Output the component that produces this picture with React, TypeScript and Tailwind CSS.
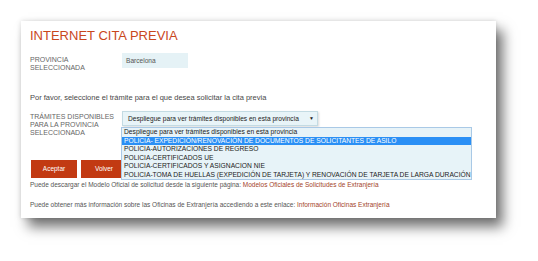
import React from 'react';

const opciones = [
  'Despliegue para ver trámites disponibles en esta provincia',
  'POLICIA- EXPEDICIÓN/RENOVACIÓN DE DOCUMENTOS DE SOLICITANTES DE ASILO',
  'POLICIA-AUTORIZACIONES DE REGRESO',
  'POLICIA-CERTIFICADOS UE',
  'POLICIA-CERTIFICADOS Y ASIGNACION NIE',
  'POLICIA-TOMA DE HUELLAS (EXPEDICIÓN DE TARJETA) Y RENOVACIÓN DE TARJETA DE LARGA DURACIÓN',
];

const App: React.FC = () => {
  return (
    <div className="w-[538px] h-[261px] bg-white pt-[21px] pl-[21px] font-['Liberation_Sans',Arial,sans-serif]">
      <div className="relative w-[475px] h-[197px] bg-white pl-[9px] pt-[7px] shadow-[7px_9px_12px_rgba(0,0,0,0.55),0_0_5px_rgba(0,0,0,0.15)]">
        <h1 className="text-[13px] leading-[15px] text-[#c9471d]">INTERNET CITA PREVIA</h1>

        <div className="flex mt-[10px]">
          <div className="w-[92px] mt-[3px] text-[7px] leading-[8px] text-[#666]">
            PROVINCIA
            <br />
            SELECCIONADA
          </div>
          <div className="w-[66px] h-[15px] bg-[#e5f2f6] pl-[4px] text-[6.6px] leading-[15px] text-[#555]">
            Barcelona
          </div>
        </div>

        <p className="mt-[21px] text-[7.5px] leading-[10px] text-[#484848] whitespace-nowrap">
          Por favor, seleccione el trámite para el que desea solicitar la cita previa
        </p>

        <div className="flex items-start h-[25px] mt-[8px]">
          <div className="w-[92px] mt-[2px] text-[7px] leading-[8px] text-[#666]">
            TRÁMITES DISPONIBLES
            <br />
            PARA LA PROVINCIA
            <br />
            SELECCIONADA
          </div>
          <div className="relative">
            <div className="w-[196px] h-[15px] bg-[#e8f4f8] border border-[#c3dbe3] pl-[5px] pr-[3px] flex items-center justify-between text-[6.6px] text-[#222] whitespace-nowrap shadow-[1px_1px_2px_rgba(0,0,0,0.15)]">
              <span>Despliegue para ver trámites disponibles en esta provincia</span>
              <span className="text-[5px]">▼</span>
            </div>
            <ul className="absolute left-[-1px] top-[16px] z-10 w-[351px] bg-[#e7f3f8] border border-[#a9c9e6] text-[6.7px] leading-[8.5px] text-[#222] whitespace-nowrap">
              {opciones.map((o, i) => (
                <li key={o} className={i === 1 ? 'pl-[2px] bg-[#2a8ff5] text-white' : 'pl-[2px]'}>
                  {o}
                </li>
              ))}
            </ul>
          </div>
        </div>

        <div className="flex gap-[4px] mt-[24px] ml-[1px]">
          <button className="w-[46px] h-[18px] bg-[#c23a12] text-white text-[6.5px]">Aceptar</button>
          <button className="w-[46px] h-[18px] bg-[#c23a12] text-white text-[6.5px]">Volver</button>
        </div>

        <p className="mt-[3px] text-[6.5px] leading-[8px] text-[#555] whitespace-nowrap">
          Puede descargar el Modelo Oficial de solicitud desde la siguiente página:{' '}
          <span className="text-[#a3442a]">Modelos Oficiales de Solicitudes de Extranjería</span>
        </p>
        <p className="mt-[12px] text-[6.5px] leading-[8px] text-[#555] whitespace-nowrap">
          Puede obtener más información sobre las Oficinas de Extranjería accediendo a este enlace:{' '}
          <span className="text-[#a3442a]">Información Oficinas Extranjería</span>
        </p>
      </div>
    </div>
  );
};

export default App;
